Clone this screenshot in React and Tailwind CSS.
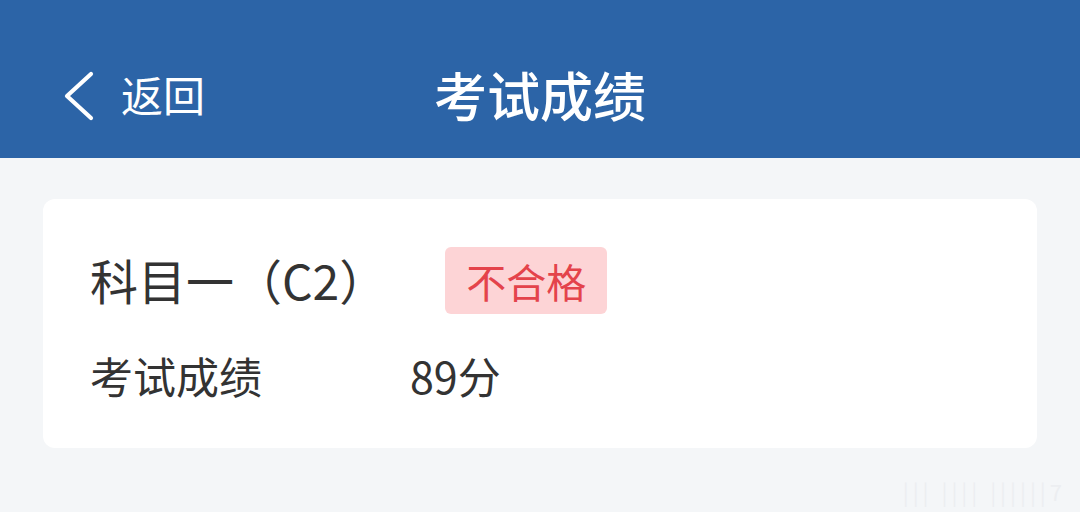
export default function App() {
  return (
    <div
      className="w-[1080px] h-[512px] bg-[#f4f6f8] overflow-hidden relative"
      style={{ fontFamily: '"Noto Sans CJK SC", "Noto Sans", sans-serif' }}
    >
      <header className="h-[158px] bg-[#2c64a7] pt-[33px]">
        <div className="h-[122px] relative flex items-center justify-center">
          <button className="absolute left-[63px] top-0 h-full flex items-center text-white">
            <svg width="32" height="50" viewBox="0 0 32 50" fill="none" className="mt-[3px]">
              <path d="M28 3 L4 25 L28 47" stroke="white" strokeWidth="4.2" strokeLinecap="round" strokeLinejoin="round" />
            </svg>
            <span className="ml-[26px] text-[42px] leading-none">返回</span>
          </button>
          <h1 className="text-white text-[53px] font-medium leading-none">考试成绩</h1>
        </div>
      </header>

      <div className="px-[43px] pt-[41px]">
        <div className="bg-white rounded-[12px] px-[47px] pt-[48px] pb-[48px]">
          <div className="flex items-center h-[67px]">
            <span className="text-[48px] text-[#333333] leading-none -mt-[4px]">科目一（C2）</span>
            <span className="ml-[58px] h-[67px] px-[21px] flex items-center bg-[#fdd4d6] text-[#e4434b] text-[40px] leading-none rounded-[6px]">
              不合格
            </span>
          </div>
          <div className="flex items-center h-[50px] mt-[36px] text-[43px] text-[#333333] leading-none">
            <span className="w-[320px]">考试成绩</span>
            <span>89分</span>
          </div>
        </div>
      </div>

      <div className="absolute right-[14px] bottom-[10px] text-[22px] text-[#eceef1] leading-none tracking-[4px]">
        ||| |||| ||||||7
      </div>
    </div>
  )
}
